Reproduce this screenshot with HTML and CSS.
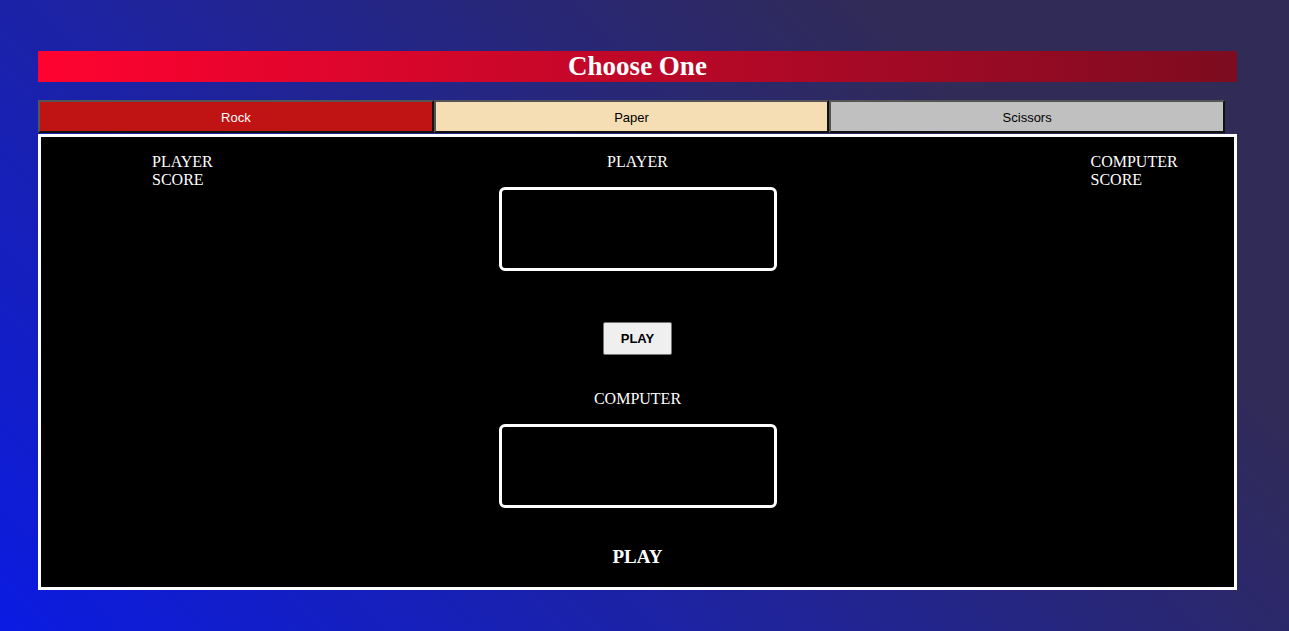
FILE: index.html
```html
<!DOCTYPE html>
<html lang="en">
<head>
<meta charset="utf-8">
<title>Rock Paper Scissors</title>
<link rel="stylesheet" href="styles.css">
</head>
<body>
<div class="wrap">
  <h1 class="title">Choose One</h1>
  <div class="choices">
    <button class="choice rock">Rock</button>
    <button class="choice paper">Paper</button>
    <button class="choice scissors">Scissors</button>
  </div>
  <div class="panel">
    <div class="score score-left">PLAYER<br>SCORE</div>
    <div class="center">
      <div class="label">PLAYER</div>
      <div class="slot"></div>
      <button class="play-btn">PLAY</button>
      <div class="label label-computer">COMPUTER</div>
      <div class="slot"></div>
      <div class="result">PLAY</div>
    </div>
    <div class="score score-right">COMPUTER<br>SCORE</div>
  </div>
</div>
</body>
</html>
```

FILE: styles.css
```css
html {
  min-height: 100%;
  background: linear-gradient(45deg, #0b1be2 0%, #312b57 78%, #312b57 100%);
}
body {
  margin: 0;
  min-height: 631px;
  font-family: "Liberation Serif", "Times New Roman", serif;
}
.wrap {
  width: 1199px;
  margin-left: 38px;
  padding-top: 51px;
}
.title {
  margin: 0;
  height: 31px;
  line-height: 31px;
  text-align: center;
  font-size: 27px;
  font-weight: bold;
  color: #ffffff;
  background: linear-gradient(to right, #ff0330, #7d0c20);
}
.choices {
  display: flex;
  margin-top: 18px;
}
.choice {
  width: 33%;
  height: 33px;
  margin: 0;
  padding: 1px 0 0;
  font-family: "Liberation Sans", Arial, sans-serif;
  font-size: 13px;
  border: 2px solid;
  border-color: #555555 #111111 #111111 #555555;
}
.rock { background: #c01313; color: #ffffff; }
.paper { background: #f5deb3; color: #000000; }
.scissors { background: #c0c0c0; color: #000000; }
.panel {
  margin-top: 1px;
  background: #000000;
  border: 3px solid #ffffff;
  display: grid;
  grid-template-columns: 1fr 278px 1fr;
  color: #ffffff;
  font-size: 16px;
  line-height: 18px;
  padding: 16px 0 19px;
}
.score-left {
  padding-left: 111px;
}
.score-right {
  padding-left: 314px;
}
.center {
  display: flex;
  flex-direction: column;
  align-items: center;
}
.label {
  height: 18px;
}
.slot {
  box-sizing: border-box;
  width: 278px;
  height: 84px;
  margin-top: 16px;
  border: 3px solid #ffffff;
  border-radius: 6px;
}
.play-btn {
  margin-top: 51px;
  height: 33px;
  width: 69px;
  padding: 0;
  font-family: "Liberation Sans", Arial, sans-serif;
  font-size: 13px;
  font-weight: bold;
  color: #000000;
  background: #efefef;
  border: 1px solid #767676;
  border-radius: 2px;
}
.label-computer {
  margin-top: 35px;
}
.result {
  margin-top: 38px;
  font-size: 19px;
  font-weight: bold;
  line-height: 22px;
}
```
